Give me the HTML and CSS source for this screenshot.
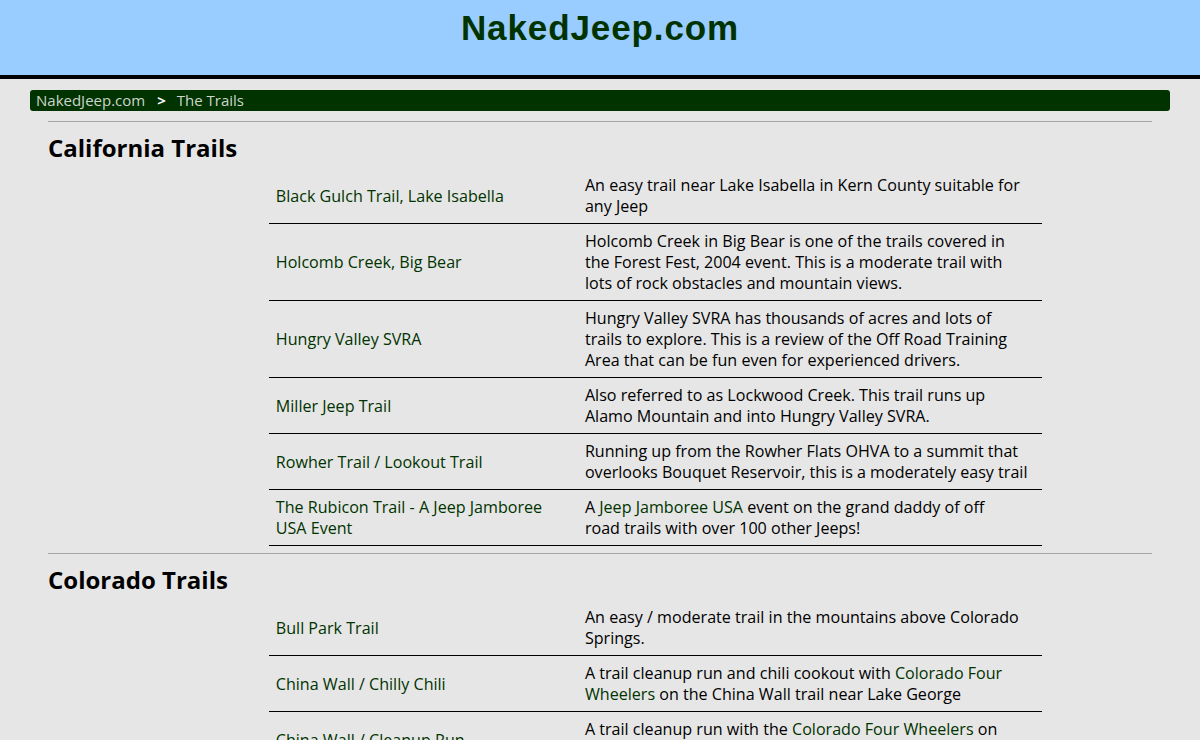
FILE: index.html
```html
<!DOCTYPE html>
<html>
<head>
<meta charset="utf-8">
<title>NakedJeep.com - The Trails</title>
<link rel="stylesheet" href="styles.css">
</head>
<body>
<div class="header"><h1 class="site-title">NakedJeep.com</h1></div>
<div class="page">
  <div class="crumbs"><a href="#">NakedJeep.com</a><span class="sep">&gt;</span><a href="#">The Trails</a></div>
  <div class="content">
    <hr class="rule first">
    <h2 class="region">California Trails</h2>
    <table class="trails">
      <tr><td class="name"><a href="#">Black Gulch Trail, Lake Isabella</a></td><td class="desc">An easy trail near Lake Isabella in Kern County suitable for<br>any Jeep</td></tr>
      <tr><td class="name"><a href="#">Holcomb Creek, Big Bear</a></td><td class="desc">Holcomb Creek in Big Bear is one of the trails covered in<br>the Forest Fest, 2004 event. This is a moderate trail with<br>lots of rock obstacles and mountain views.</td></tr>
      <tr><td class="name"><a href="#">Hungry Valley SVRA</a></td><td class="desc">Hungry Valley SVRA has thousands of acres and lots of<br>trails to explore. This is a review of the Off Road Training<br>Area that can be fun even for experienced drivers.</td></tr>
      <tr><td class="name"><a href="#">Miller Jeep Trail</a></td><td class="desc">Also referred to as Lockwood Creek. This trail runs up<br>Alamo Mountain and into Hungry Valley SVRA.</td></tr>
      <tr><td class="name"><a href="#">Rowher Trail / Lookout Trail</a></td><td class="desc">Running up from the Rowher Flats OHVA to a summit that<br>overlooks Bouquet Reservoir, this is a moderately easy trail</td></tr>
      <tr><td class="name"><a href="#">The Rubicon Trail - A Jeep Jamboree USA Event</a></td><td class="desc">A <a href="#">Jeep Jamboree USA</a> event on the grand daddy of off<br>road trails with over 100 other Jeeps!</td></tr>
    </table>
    <hr class="rule">
    <h2 class="region">Colorado Trails</h2>
    <table class="trails">
      <tr><td class="name"><a href="#">Bull Park Trail</a></td><td class="desc">An easy / moderate trail in the mountains above Colorado<br>Springs.</td></tr>
      <tr><td class="name"><a href="#">China Wall / Chilly Chili</a></td><td class="desc">A trail cleanup run and chili cookout with <a href="#">Colorado Four<br>Wheelers</a> on the China Wall trail near Lake George</td></tr>
      <tr><td class="name"><a href="#">China Wall / Cleanup Run</a></td><td class="desc">A trail cleanup run with the <a href="#">Colorado Four Wheelers</a> on<br>the China Wall trail near Lake George</td></tr>
    </table>
  </div>
</div>
</body>
</html>
```
FILE: styles.css
```css
html, body {
  margin: 0;
  padding: 0;
  background: #e6e6e6;
  font-family: "Open Sans", "Noto Sans", sans-serif;
  font-size: 16.1px;
  color: #000;
}
a {
  color: #003300;
  text-decoration: none;
}
.header {
  background: #99ccff;
  height: 75px;
  border-bottom: 4px solid #000;
}
.site-title {
  margin: 0;
  padding-top: 7px;
  text-align: center;
  font-family: "Liberation Sans", Arial, sans-serif;
  font-weight: bold;
  font-size: 35px;
  line-height: 41px;
  letter-spacing: 0.9px;
  color: #003300;
}
.page {
  padding: 11px 30px 0;
}
.crumbs {
  background: #003300;
  border-radius: 3px;
  height: 21px;
  line-height: 21px;
  padding: 0 6px;
  font-size: 15px;
  color: #fff;
}
.crumbs a {
  color: #cdd5cd;
}
.crumbs .sep {
  font-weight: bold;
  margin: 0 11px 0 12px;
}
.content {
  padding: 0 18px;
}
.rule {
  margin: 7px 0 0;
  border: 0;
  border-top: 1px solid #a6a6a6;
  height: 0;
}
.rule.first {
  margin-top: 10px;
}
.region {
  margin: 11px 0 5px;
  font-size: 24px;
  line-height: 30px;
  font-weight: bold;
}
.trails {
  margin-left: 20%;
  width: 70%;
  border-collapse: collapse;
}
.trails td {
  padding: 7px 7px 6px;
  border-bottom: 1px solid #000;
  line-height: 21px;
  vertical-align: middle;
}
.trails td.name {
  width: 40%;
}
```
